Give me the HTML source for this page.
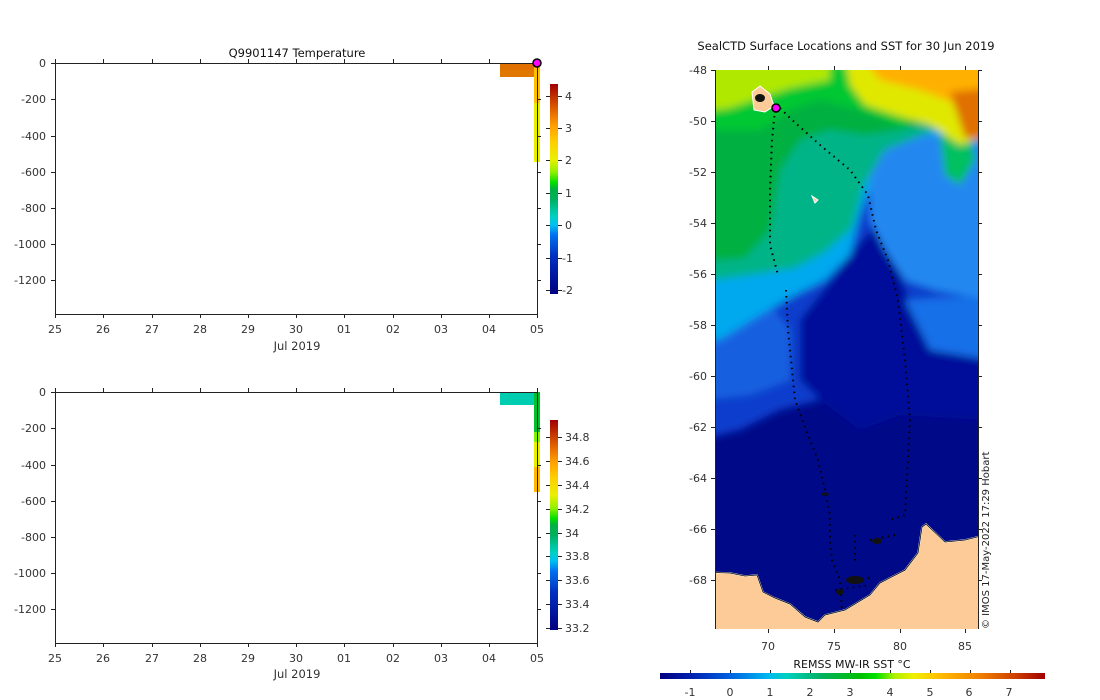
<!DOCTYPE html>
<html><head><meta charset="utf-8"><style>
html,body{margin:0;padding:0;background:#fff;width:1100px;height:700px;overflow:hidden}
svg text{font-family:"DejaVu Sans","Liberation Sans",sans-serif;font-size:11px;fill:#333}
</style></head><body>
<svg width="1100" height="700" viewBox="0 0 1100 700" xmlns="http://www.w3.org/2000/svg">
<defs>
<linearGradient id="tc" x1="0" y1="1" x2="0" y2="0">
<stop offset="0" stop-color="#000080"/><stop offset="0.18" stop-color="#0030c0"/><stop offset="0.28" stop-color="#0070f0"/><stop offset="0.33" stop-color="#00c0f0"/><stop offset="0.37" stop-color="#00d0c0"/><stop offset="0.45" stop-color="#00b060"/><stop offset="0.5" stop-color="#00b040"/><stop offset="0.53" stop-color="#00e000"/><stop offset="0.58" stop-color="#90f000"/><stop offset="0.64" stop-color="#e8f000"/><stop offset="0.72" stop-color="#ffd000"/><stop offset="0.8" stop-color="#ffa000"/><stop offset="0.88" stop-color="#e06000"/><stop offset="1" stop-color="#a00000"/>
</linearGradient>
<linearGradient id="hc" x1="0" y1="0" x2="1" y2="0">
<stop offset="0" stop-color="#000080"/><stop offset="0.08" stop-color="#0020b0"/><stop offset="0.18" stop-color="#0060e0"/><stop offset="0.28" stop-color="#00b8f0"/><stop offset="0.33" stop-color="#00d0c0"/><stop offset="0.42" stop-color="#00b060"/><stop offset="0.52" stop-color="#00c000"/><stop offset="0.56" stop-color="#00e000"/><stop offset="0.61" stop-color="#b0f000"/><stop offset="0.66" stop-color="#f0f000"/><stop offset="0.72" stop-color="#ffc000"/><stop offset="0.83" stop-color="#f08000"/><stop offset="0.92" stop-color="#d04000"/><stop offset="1" stop-color="#a00000"/>
</linearGradient>
<clipPath id="mc"><rect x="715" y="70" width="263" height="559"/></clipPath>
<filter id="bl" x="-10%" y="-10%" width="120%" height="120%"><feGaussianBlur stdDeviation="4"/></filter>
</defs>

<!-- TOP PLOT -->
<text x="297" y="57" text-anchor="middle" style="fill:#111;font-size:11.5px">Q9901147  Temperature</text>
<rect x="500" y="63" width="34" height="7" fill="#e07000"/>
<rect x="500" y="70" width="34" height="7" fill="#e07800"/>
<rect x="534" y="66" width="6" height="37" fill="#ffc000"/>
<rect x="534" y="103" width="6" height="59" fill="#e8f000"/>
<g stroke="#222" stroke-width="1" fill="none">
<path d="M55.5 63.5H537.5M55.5 63V315M55 314.5H538M537.5 63V315"/>
<path d="M55.5 63v-4M103.5 63v-4M152.5 63v-4M200.5 63v-4M248.5 63v-4M296.5 63v-4M344.5 63v-4M393.5 63v-4M441.5 63v-4M489.5 63v-4"/>
<path d="M55.5 314v4M103.5 314v4M152.5 314v4M200.5 314v4M248.5 314v4M296.5 314v4M344.5 314v4M393.5 314v4M441.5 314v4M489.5 314v4M537.5 314v4"/>
<path d="M51 63.5h4M51 99.5h4M51 136.5h4M51 172.5h4M51 208.5h4M51 244.5h4M51 280.5h4"/>
<path d="M537 99.5h4M537 136.5h4M537 172.5h4M537 208.5h4M537 244.5h4M537 280.5h4"/>
</g>
<circle cx="537" cy="63" r="4" fill="#ff00ff" stroke="#000" stroke-width="1.5"/>
<g text-anchor="end">
<text x="46" y="67">0</text><text x="46" y="103">-200</text><text x="46" y="140">-400</text><text x="46" y="176">-600</text><text x="46" y="212">-800</text><text x="46" y="248">-1000</text><text x="46" y="284">-1200</text>
</g>
<g text-anchor="middle">
<text x="55" y="333">25</text><text x="103" y="333">26</text><text x="152" y="333">27</text><text x="200" y="333">28</text><text x="248" y="333">29</text><text x="296" y="333">30</text><text x="344" y="333">01</text><text x="393" y="333">02</text><text x="441" y="333">03</text><text x="489" y="333">04</text><text x="537" y="333">05</text>
<text x="297" y="350" style="font-size:11.5px">Jul 2019</text>
</g>
<rect x="550" y="84" width="8" height="210" fill="url(#tc)"/>
<g stroke="#222"><path d="M546 96.5h4M558 96.5h4M546 128.5h4M558 128.5h4M546 160.5h4M558 160.5h4M546 193.5h4M558 193.5h4M546 225.5h4M558 225.5h4M546 258.5h4M558 258.5h4M546 290.5h4M558 290.5h4"/></g>
<text x="565" y="100">4</text><text x="565" y="132">3</text><text x="565" y="164">2</text><text x="565" y="197">1</text><text x="565" y="229">0</text><text x="562" y="262">-1</text><text x="562" y="294">-2</text>

<!-- BOTTOM PLOT -->
<rect x="500" y="392" width="34" height="13" fill="#00ccb0"/>
<rect x="534" y="392" width="6" height="40" fill="#00c030"/>
<rect x="534" y="432" width="6" height="10" fill="#80f000"/>
<rect x="534" y="442" width="6" height="25" fill="#e8f000"/>
<rect x="534" y="467" width="6" height="25" fill="#ffb800"/>
<g stroke="#222" stroke-width="1" fill="none">
<path d="M55.5 392.5H537.5M55.5 392V644M55 643.5H538M537.5 392V644"/>
<path d="M55.5 392v-4M103.5 392v-4M152.5 392v-4M200.5 392v-4M248.5 392v-4M296.5 392v-4M344.5 392v-4M393.5 392v-4M441.5 392v-4M489.5 392v-4M537.5 392v-4"/>
<path d="M55.5 643v4M103.5 643v4M152.5 643v4M200.5 643v4M248.5 643v4M296.5 643v4M344.5 643v4M393.5 643v4M441.5 643v4M489.5 643v4M537.5 643v4"/>
<path d="M51 392.5h4M51 428.5h4M51 465.5h4M51 501.5h4M51 537.5h4M51 573.5h4M51 609.5h4"/>
<path d="M537 428.5h4M537 465.5h4M537 501.5h4M537 537.5h4M537 573.5h4M537 609.5h4"/>
</g>
<g text-anchor="end">
<text x="46" y="396">0</text><text x="46" y="432">-200</text><text x="46" y="469">-400</text><text x="46" y="505">-600</text><text x="46" y="541">-800</text><text x="46" y="577">-1000</text><text x="46" y="613">-1200</text>
</g>
<g text-anchor="middle">
<text x="55" y="662">25</text><text x="103" y="662">26</text><text x="152" y="662">27</text><text x="200" y="662">28</text><text x="248" y="662">29</text><text x="296" y="662">30</text><text x="344" y="662">01</text><text x="393" y="662">02</text><text x="441" y="662">03</text><text x="489" y="662">04</text><text x="537" y="662">05</text>
<text x="297" y="678" style="font-size:11.5px">Jul 2019</text>
</g>
<rect x="550" y="420" width="8" height="210" fill="url(#tc)"/>
<g stroke="#222"><path d="M546 437.5h4M558 437.5h4M546 461.5h4M558 461.5h4M546 485.5h4M558 485.5h4M546 509.5h4M558 509.5h4M546 533.5h4M558 533.5h4M546 556.5h4M558 556.5h4M546 580.5h4M558 580.5h4M546 604.5h4M558 604.5h4M546 628.5h4M558 628.5h4"/></g>
<text x="565" y="441">34.8</text><text x="565" y="465">34.6</text><text x="565" y="489">34.4</text><text x="565" y="513">34.2</text><text x="565" y="537">34</text><text x="565" y="560">33.8</text><text x="565" y="584">33.6</text><text x="565" y="608">33.4</text><text x="565" y="632">33.2</text>

<!-- MAP -->
<text x="846" y="50" text-anchor="middle" style="fill:#111;font-size:11.5px">SealCTD Surface Locations and SST for 30 Jun 2019</text>
<g clip-path="url(#mc)">
<rect x="700" y="60" width="300" height="580" fill="#000a88"/>
<g filter="url(#bl)">
<polygon fill="#0a3ccc" points="700,60 990,60 990,390 950,400 910,380 870,420 820,400 780,410 740,430 700,440"/>
<polygon fill="#00109a" points="800,320 835,275 858,245 876,225 895,255 915,320 990,340 990,420 900,415 860,430 820,400 800,380"/>
<polygon fill="#1660e0" points="700,320 770,305 790,330 790,380 750,395 700,400"/>
<polygon fill="#1870e8" points="905,300 990,295 990,360 930,350"/>
<polygon fill="#00a8ee" points="700,60 990,60 990,150 930,135 880,160 860,215 850,255 825,280 795,295 760,315 720,340 700,340"/>
<polygon fill="#2088f0" points="870,150 925,135 990,140 990,300 935,290 905,280 885,250 870,220"/>
<polygon fill="#00b488" points="700,60 990,60 990,115 935,130 885,150 864,185 852,228 825,252 795,268 750,275 700,282"/>
<polygon fill="#00b040" points="700,60 990,60 990,110 940,118 900,130 865,135 830,130 800,140 780,170 770,230 745,258 700,262"/>
<polygon fill="#00c060" points="940,135 970,135 975,160 960,185 945,175"/>
<polygon fill="#00c830" points="700,60 990,60 990,105 940,112 900,125 860,110 820,100 790,110 760,130 720,130 700,130"/>
<polygon fill="#b0e800" points="700,60 830,60 830,80 790,88 760,98 730,108 700,112"/>
<polygon fill="#e0e800" points="845,60 990,60 990,135 960,145 930,125 895,115 865,105 850,85"/>
<polygon fill="#ffb000" points="865,60 990,60 990,125 960,105 920,90 880,80"/>
<polygon fill="#e07000" points="950,92 990,88 990,140 965,138"/>
</g>
<polygon fill="#fdcb98" stroke="#fff" stroke-width="1.5" points="700,572 730,573 745,576 757,575 763,592 775,598 790,604 805,617 818,622 825,615 845,610 870,595 880,583 905,570 918,553 922,527 926,524 945,542 965,540 985,535 985,640 700,640"/>
<polyline fill="none" stroke="#000" stroke-width="0.8" points="700,572 730,573 745,576 757,575 763,592 775,598 790,604 805,617 818,622 825,615 845,610 870,595 880,583 905,570 918,553 922,527 926,524 945,542 965,540 985,535"/>
<polygon fill="#fdcb98" stroke="#fff" stroke-width="1" points="752,92 760,86 770,94 774,106 765,112 754,110"/>
<path d="M812 196 l6 4 -3 3z" fill="#fdcb98" stroke="#fff"/>
<g fill="none" stroke="#000" stroke-width="2" stroke-dasharray="1.5 4.5">
<path d="M775 110 L772 140 L770 190 L770 245 L778 275 M786 290 L788 330 L795 400 L810 440 L818 460 L825 490 L830 515 L830 540 L832 560 L840 580 L842 612"/>
<path d="M780 108 L790 118 L820 145 L850 170 L868 195 L876 230 L888 260 L898 300 L905 360 L910 420 L908 460 L905 515 L890 520"/>
<path d="M855 535 L855 565 M870 540 L895 535 M850 580 L870 578 M835 590 L870 585"/>
</g>
<g fill="#111"><ellipse cx="877" cy="541" rx="5" ry="3"/><ellipse cx="855" cy="580" rx="9" ry="4"/><ellipse cx="840" cy="592" rx="4" ry="3"/><ellipse cx="825" cy="494" rx="4" ry="1.5"/><ellipse cx="760" cy="98" rx="5" ry="4"/></g>
</g>
<circle cx="776" cy="108" r="4" fill="#ff00ff" stroke="#000" stroke-width="1.5"/>
<g stroke="#222" stroke-width="1" fill="none">
<path d="M715.5 70V629M978.5 70V629"/>
<path d="M711 70.5h4M711 121.5h4M711 172.5h4M711 223.5h4M711 274.5h4M711 325.5h4M711 376.5h4M711 427.5h4M711 478.5h4M711 529.5h4M711 580.5h4"/>
<path d="M978 70.5h4M978 121.5h4M978 172.5h4M978 223.5h4M978 274.5h4M978 325.5h4M978 376.5h4M978 427.5h4M978 478.5h4M978 529.5h4M978 580.5h4"/>
<path d="M768.5 70v-4M834.5 70v-4M900.5 70v-4M965.5 70v-4M768.5 629v4M834.5 629v4M900.5 629v4M965.5 629v4"/>
</g>
<g text-anchor="end">
<text x="707" y="74">-48</text><text x="707" y="125">-50</text><text x="707" y="176">-52</text><text x="707" y="227">-54</text><text x="707" y="278">-56</text><text x="707" y="329">-58</text><text x="707" y="380">-60</text><text x="707" y="431">-62</text><text x="707" y="482">-64</text><text x="707" y="533">-66</text><text x="707" y="584">-68</text>
</g>
<g text-anchor="middle">
<text x="768" y="650">70</text><text x="834" y="650">75</text><text x="900" y="650">80</text><text x="965" y="650">85</text>
<text x="852" y="668" style="fill:#111">REMSS MW-IR SST °C</text>
</g>
<text transform="translate(989,629) rotate(-90)" style="font-size:10px;fill:#222">© IMOS 17-May-2022 17:29 Hobart</text>
<rect x="660" y="673" width="385" height="6" fill="url(#hc)"/>
<g stroke="#222"><path d="M690.5 670v3M730.5 670v3M770.5 670v3M810.5 670v3M850.5 670v3M890.5 670v3M930.5 670v3M970.5 670v3M1010.5 670v3"/></g>
<g text-anchor="middle">
<text x="690" y="696">-1</text><text x="730" y="696">0</text><text x="770" y="696">1</text><text x="810" y="696">2</text><text x="850" y="696">3</text><text x="890" y="696">4</text><text x="930" y="696">5</text><text x="969" y="696">6</text><text x="1009" y="696">7</text>
</g>
</svg>
</body></html>
